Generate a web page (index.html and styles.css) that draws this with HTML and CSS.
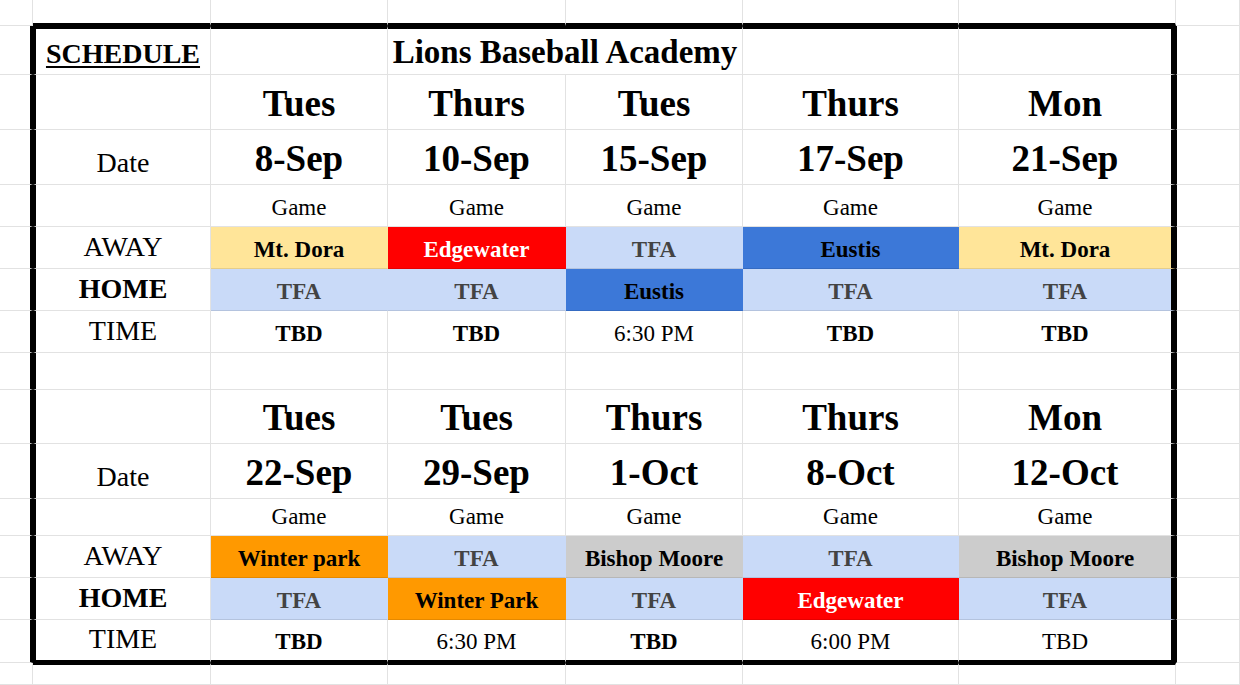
FILE: index.html
```html
<!DOCTYPE html>
<html lang="en">
<head>
<meta charset="utf-8">
<title>Lions Baseball Academy Schedule</title>
<link rel="stylesheet" href="styles.css">
</head>
<body>
<div class="sheet">
  <!-- row 0 (outside, above block) -->
  <div class="cell"></div>
  <div class="cell mt"></div><div class="cell mt"></div><div class="cell mt"></div><div class="cell mt"></div><div class="cell mt"></div><div class="cell mt"></div>
  <div class="cell"></div>

  <!-- row 1 -->
  <div class="cell ml"></div>
  <div class="cell bl bt sched">SCHEDULE</div>
  <div class="cell bt"></div>
  <div class="cell bt title span2">Lions Baseball Academy</div>
  <div class="cell bt"></div>
  <div class="cell bt br"></div>
  <div class="cell mr"></div>

  <!-- row 2 -->
  <div class="cell ml"></div>
  <div class="cell bl"></div>
  <div class="cell hd">Tues</div>
  <div class="cell hd">Thurs</div>
  <div class="cell hd">Tues</div>
  <div class="cell hd">Thurs</div>
  <div class="cell hd br">Mon</div>
  <div class="cell mr"></div>

  <!-- row 3 -->
  <div class="cell ml"></div>
  <div class="cell bl lbl">Date</div>
  <div class="cell hd">8-Sep</div>
  <div class="cell hd">10-Sep</div>
  <div class="cell hd">15-Sep</div>
  <div class="cell hd">17-Sep</div>
  <div class="cell hd br">21-Sep</div>
  <div class="cell mr"></div>

  <!-- row 4 -->
  <div class="cell ml"></div>
  <div class="cell bl"></div>
  <div class="cell val">Game</div>
  <div class="cell val">Game</div>
  <div class="cell val">Game</div>
  <div class="cell val">Game</div>
  <div class="cell val br">Game</div>
  <div class="cell mr"></div>

  <!-- row 5 -->
  <div class="cell ml"></div>
  <div class="cell bl lbl">AWAY</div>
  <div class="cell val-b yellow">Mt. Dora</div>
  <div class="cell val-b red">Edgewater</div>
  <div class="cell val-b lblue">TFA</div>
  <div class="cell val-b blue">Eustis</div>
  <div class="cell val-b yellow br">Mt. Dora</div>
  <div class="cell mr"></div>

  <!-- row 6 -->
  <div class="cell ml"></div>
  <div class="cell bl lbl-b">HOME</div>
  <div class="cell val-b lblue">TFA</div>
  <div class="cell val-b lblue">TFA</div>
  <div class="cell val-b blue">Eustis</div>
  <div class="cell val-b lblue">TFA</div>
  <div class="cell val-b lblue br">TFA</div>
  <div class="cell mr"></div>

  <!-- row 7 -->
  <div class="cell ml"></div>
  <div class="cell bl lbl">TIME</div>
  <div class="cell val-b">TBD</div>
  <div class="cell val-b">TBD</div>
  <div class="cell val">6:30 PM</div>
  <div class="cell val-b">TBD</div>
  <div class="cell val-b br">TBD</div>
  <div class="cell mr"></div>

  <!-- row 8 (spacer) -->
  <div class="cell ml"></div>
  <div class="cell bl"></div>
  <div class="cell"></div><div class="cell"></div><div class="cell"></div><div class="cell"></div>
  <div class="cell br"></div>
  <div class="cell mr"></div>

  <!-- row 9 -->
  <div class="cell ml"></div>
  <div class="cell bl"></div>
  <div class="cell hd">Tues</div>
  <div class="cell hd">Tues</div>
  <div class="cell hd">Thurs</div>
  <div class="cell hd">Thurs</div>
  <div class="cell hd br">Mon</div>
  <div class="cell mr"></div>

  <!-- row 10 -->
  <div class="cell ml"></div>
  <div class="cell bl lbl">Date</div>
  <div class="cell hd">22-Sep</div>
  <div class="cell hd">29-Sep</div>
  <div class="cell hd">1-Oct</div>
  <div class="cell hd">8-Oct</div>
  <div class="cell hd br">12-Oct</div>
  <div class="cell mr"></div>

  <!-- row 11 -->
  <div class="cell ml"></div>
  <div class="cell bl"></div>
  <div class="cell val">Game</div>
  <div class="cell val">Game</div>
  <div class="cell val">Game</div>
  <div class="cell val">Game</div>
  <div class="cell val br">Game</div>
  <div class="cell mr"></div>

  <!-- row 12 -->
  <div class="cell ml"></div>
  <div class="cell bl lbl">AWAY</div>
  <div class="cell val-b orange">Winter park</div>
  <div class="cell val-b lblue">TFA</div>
  <div class="cell val-b gray">Bishop Moore</div>
  <div class="cell val-b lblue">TFA</div>
  <div class="cell val-b gray br">Bishop Moore</div>
  <div class="cell mr"></div>

  <!-- row 13 -->
  <div class="cell ml"></div>
  <div class="cell bl lbl-b">HOME</div>
  <div class="cell val-b lblue">TFA</div>
  <div class="cell val-b orange">Winter Park</div>
  <div class="cell val-b lblue">TFA</div>
  <div class="cell val-b red">Edgewater</div>
  <div class="cell val-b lblue br">TFA</div>
  <div class="cell mr"></div>

  <!-- row 14 -->
  <div class="cell ml"></div>
  <div class="cell bl bb lbl">TIME</div>
  <div class="cell bb val-b">TBD</div>
  <div class="cell bb val">6:30 PM</div>
  <div class="cell bb val-b">TBD</div>
  <div class="cell bb val">6:00 PM</div>
  <div class="cell bb val br">TBD</div>
  <div class="cell mr"></div>

  <!-- row 15 (outside, below block) -->
  <div class="cell"></div>
  <div class="cell mb"></div><div class="cell mb"></div><div class="cell mb"></div><div class="cell mb"></div><div class="cell mb"></div><div class="cell mb"></div>
  <div class="cell"></div>
</div>
</body>
</html>
```

FILE: styles.css
```css
* {
  box-sizing: border-box;
}

html,
body {
  margin: 0;
  padding: 0;
  background: #ffffff;
  overflow: hidden;
}

body {
  font-family: "Liberation Serif", "Times New Roman", serif;
  color: #000000;
}

.sheet {
  display: grid;
  grid-template-columns: 33px 178px 177px 178px 177px 216px 217px 1fr;
  grid-template-rows: 26px 49px 55px 55px 42px 42px 42px 42px 37px 54px 55px 37px 42px 42px 43px 22px;
  width: 1240px;
  height: 685px;
}

.cell {
  display: flex;
  align-items: flex-end;
  justify-content: center;
  padding: 0 2px 5px;
  border-right: 1px solid #e2e2e2;
  border-bottom: 1px solid #e2e2e2;
  white-space: nowrap;
  line-height: normal;
  min-width: 0;
}

.span2 {
  grid-column: span 2;
}

/* text styles */
.sched {
  font-size: 28px;
  font-weight: 700;
  text-decoration: underline;
  text-decoration-thickness: 2px;
  text-underline-offset: 3px;
  padding-bottom: 4px;
}

.title {
  font-size: 33px;
  font-weight: 700;
  padding-bottom: 3px;
}

.hd {
  font-size: 37px;
  font-weight: 700;
  padding-bottom: 4px;
}

.lbl {
  font-size: 28px;
}

.lbl-b {
  font-size: 28px;
  font-weight: 700;
}

.val {
  font-size: 23px;
}

.val-b {
  font-size: 23px;
  font-weight: 700;
}

/* fills */
.yellow,
.red,
.lblue,
.blue,
.orange,
.gray {
  border-right-color: transparent;
  border-bottom-color: rgba(0, 0, 0, 0.1);
}

.yellow {
  background: #ffe599;
}

.red {
  background: #ff0000;
  color: #ffffff;
}

.lblue {
  background: #c9daf8;
  color: #434343;
}

.blue {
  background: #3c78d8;
  color: #000000;
}

.orange {
  background: #ff9900;
}

.gray {
  background: #cccccc;
}

/* thick outline of the schedule range */
.mt {
  border-bottom: 3px solid #000000;
}

.mb {
  border-top: 2px solid #000000;
}

.ml {
  border-right: 3px solid #000000;
}

.mr {
  border-left: 1px solid #000000;
}

.bl {
  border-left: 3px solid #000000;
}

.br {
  border-right: 5px solid #000000;
}

.bt {
  border-top: 3px solid #000000;
}

.bb {
  border-bottom: 3px solid #000000;
}
```
